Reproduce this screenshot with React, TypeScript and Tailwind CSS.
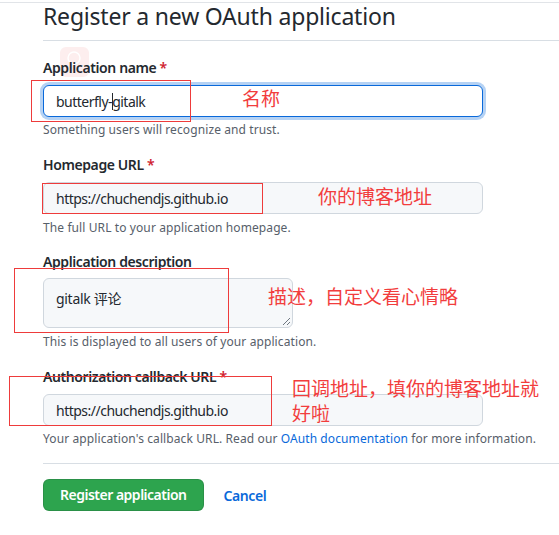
import type { ReactNode } from "react";

const FONT = { fontFamily: "'Noto Sans', 'Noto Sans CJK SC', sans-serif" };

function Label({ text, required, children }: { text: string; required?: boolean; children?: ReactNode }) {
  return (
    <div className="relative h-[20px] text-[14px] leading-[20px] font-semibold tracking-[-0.4px] text-[#24292f]">
      {children}
      <span className="relative">
        {text}
        {required && <span className="text-[#cf222e]"> *</span>}
      </span>
    </div>
  );
}

function Hint({ children, className = "" }: { children: ReactNode; className?: string }) {
  return (
    <div className={`text-[12px] leading-[18px] tracking-[0.1px] text-[#57606a] ${className}`}>{children}</div>
  );
}

function Note({ box, text }: { box: string; text: string }) {
  return (
    <>
      <div className={`absolute border border-[#ee3b3b] ${box}`} />
      <div className={`absolute text-[19px] leading-[25px] text-[#f23d3d] ${text}`} />
    </>
  );
}

export default function App() {
  return (
    <div className="w-[559px] h-[535px] bg-white overflow-hidden" style={FONT}>
      <div className="h-[3px] border-b border-[#e1e4e8]" />
      <div className="pl-[43px] flex flex-col">
        <div className="h-[38px] border-b border-[#d8dee4] text-[23px] leading-[26px] tracking-[-0.2px] text-[#24292f]">
          Register a new OAuth application
        </div>

        {/* Field 1 */}
        <div className="relative mt-[17px] flex flex-col w-[440px]">
          <Label text="Application name" required>
            <div className="absolute left-[17px] top-[-11px] w-[29px] h-[30px] rounded-[6px] bg-[#fdeaea] opacity-80">
              <svg className="absolute left-[6px] top-[3px]" width="16" height="16" viewBox="0 0 16 16">
                <circle cx="8" cy="8" r="6" fill="none" stroke="#ffffff" strokeWidth="1.5" />
              </svg>
            </div>
          </Label>
          <div className="mt-[7px] h-[32px] rounded-[6px] border border-[#0969da] bg-white px-[12px] flex items-center text-[14px] tracking-[-0.5px] text-[#24292f] shadow-[0_0_0_3px_rgba(9,105,218,0.3)]">
            <span>butterfly-</span>
            <span className="inline-block w-px h-[17px] bg-[#24292f] -mx-[0.5px]" />
            <span>gitalk</span>
          </div>
          <Hint className="mt-[4px]">Something users will recognize and trust.</Hint>
          <div className="absolute left-[-12px] top-[22px] w-[160px] h-[42px] border border-[#ee3b3b]" />
          <div className="absolute left-[199px] top-[29px] text-[19px] leading-[25px] text-[#f23d3d]">名称</div>
        </div>

        {/* Field 2 */}
        <div className="relative mt-[16px] flex flex-col w-[440px]">
          <Label text="Homepage URL" required />
          <div className="mt-[7px] h-[32px] rounded-[6px] border border-[#d0d7de] bg-[#f6f8fa] px-[12px] flex items-center text-[14px] tracking-[-0.5px] text-[#24292f]">
            https://chuchendjs.github.io
          </div>
          <Hint className="mt-[5px]">The full URL to your application homepage.</Hint>
          <div className="absolute left-[-1px] top-[28px] w-[221px] h-[31px] border border-[#ee3b3b]" />
          <div className="absolute left-[275px] top-[30px] text-[19px] leading-[25px] text-[#f23d3d]">你的博客地址</div>
        </div>

        {/* Field 3 */}
        <div className="relative mt-[15px] flex flex-col w-[440px]">
          <Label text="Application description" />
          <div className="relative mt-[6px] w-[250px] h-[50px] rounded-[6px] border border-[#d0d7de] bg-[#f6f8fa] px-[12px] pt-[10px] text-[14px] leading-[20px] tracking-[-0.3px] text-[#24292f]">
            gitalk 评论
            <svg className="absolute right-[1px] bottom-[1px]" width="10" height="10" viewBox="0 0 10 10">
              <line x1="9" y1="2" x2="2" y2="9" stroke="#6e7781" strokeWidth="1" />
              <line x1="9" y1="6" x2="6" y2="9" stroke="#6e7781" strokeWidth="1" />
            </svg>
          </div>
          <Hint className="mt-[5px]">This is displayed to all users of your application.</Hint>
          <div className="absolute left-[-29px] top-[16px] w-[215px] h-[65px] border border-[#ee3b3b]" />
          <div className="absolute left-[225px] top-[33px] text-[19px] leading-[25px] text-[#f23d3d]">描述，自定义看心情略</div>
        </div>

        {/* Field 4 */}
        <div className="relative mt-[16px] flex flex-col">
          <Label text="Authorization callback URL" required />
          <div className="mt-[7px] w-[440px] h-[32px] rounded-[6px] border border-[#d0d7de] bg-[#f6f8fa] px-[12px] flex items-center text-[14px] tracking-[-0.5px] text-[#24292f]">
            https://chuchendjs.github.io
          </div>
          <Hint className="mt-[4px]">
            Your application's callback URL. Read our <span className="text-[#0969da]">OAuth documentation</span> for more information.
          </Hint>
          <div className="absolute left-[-34px] top-[9px] w-[263px] h-[50px] border border-[#ee3b3b]" />
          <div className="absolute left-[249px] top-[10px] w-[250px] text-[19px] leading-[25px] text-[#f23d3d]">
            回调地址，填你的博客地址就好啦
          </div>
        </div>

        <div className="mt-[15px] h-px bg-[#d8dee4]" />

        <div className="mt-[15px] flex items-center gap-[20px]">
          <button className="h-[32px] px-[16px] rounded-[6px] border border-[rgba(27,31,36,0.15)] bg-[#2da44e] text-white text-[14px] font-semibold tracking-[-0.5px] leading-[20px]">
            Register application
          </button>
          <span className="text-[14px] font-semibold tracking-[-0.4px] text-[#0969da]">Cancel</span>
        </div>
      </div>
    </div>
  );
}
